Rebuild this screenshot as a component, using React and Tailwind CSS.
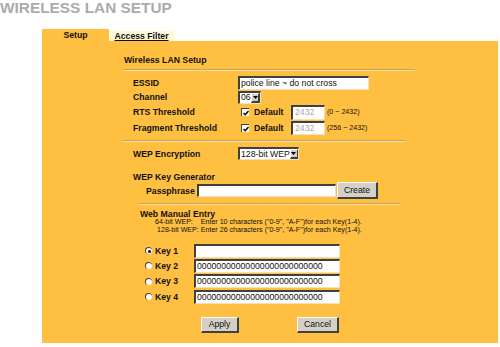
const sunken =
  'bg-white border-t-2 border-l-2 border-b border-r border-t-[#404040] border-l-[#404040] border-b-[#f4e2b4] border-r-[#f4e2b4]'
const raised =
  'bg-[#d4d0c8] border-t border-l border-t-white border-l-white border-b-2 border-r-2 border-b-[#404040] border-r-[#404040]'

function Field({ className = '', children }) {
  return (
    <div className={`flex items-center overflow-hidden whitespace-nowrap text-[8.7px] leading-none ${sunken} ${className}`}>
      {children}
    </div>
  )
}

function Select({ className = '', value }) {
  return (
    <div className={`flex items-stretch overflow-hidden whitespace-nowrap text-[8.7px] leading-none ${sunken} ${className}`}>
      <span className="flex-1 flex items-center pl-[1px]">{value}</span>
      <span className={`w-[9px] shrink-0 flex items-center justify-center ${raised}`}>
        <svg width="5" height="3" viewBox="0 0 5 3">
          <polygon points="0,0 5,0 2.5,3" fill="#000" />
        </svg>
      </span>
    </div>
  )
}

function Check() {
  return (
    <span className="ml-[3px] w-[8px] h-[8px] bg-white border-t border-l border-t-[#404040] border-l-[#404040] flex items-center justify-center">
      <svg width="6" height="6" viewBox="0 0 6 6">
        <path d="M0.5 3 L2.3 4.8 L5.5 1" stroke="#000" strokeWidth="1.4" fill="none" />
      </svg>
    </span>
  )
}

function Radio({ on }) {
  return (
    <span className="ml-[22px] w-[7px] h-[7px] rounded-full bg-white border-t border-l border-t-[#404040] border-l-[#404040] flex items-center justify-center">
      {on && <span className="w-[3px] h-[3px] rounded-full bg-black" />}
    </span>
  )
}

function Line({ className = '' }) {
  return <div className={`h-[2px] border-t border-b border-t-[#c9a35a] border-b-[#ffe3a0] ${className}`} />
}

function Row({ label, className = '', children }) {
  return (
    <div className={`flex items-center ${className}`}>
      <span className="w-[115px] pl-[10px] font-bold">{label}</span>
      {children}
    </div>
  )
}

const keys = [
  { n: 1, v: '', on: true, h: 'h-[15px]' },
  { n: 2, v: '00000000000000000000000000', h: 'h-[15px]' },
  { n: 3, v: '00000000000000000000000000', h: 'h-[16px]' },
  { n: 4, v: '00000000000000000000000000', h: 'h-[15px]' },
]

export default function App() {
  return (
    <div className="w-[500px] h-[347px] bg-white overflow-hidden font-['Liberation_Sans',Arial,Helvetica,sans-serif] text-[#111]">
      <h1 className="text-[15.4px] font-bold leading-[15px] text-[#ababab] whitespace-nowrap">WIRELESS LAN SETUP</h1>

      <div className="ml-[42px] mt-[14px] flex h-[12px] text-[8.7px] font-bold leading-none">
        <div className="w-[67px] bg-[#ffbf40] flex items-center justify-center">Setup</div>
        <div className="mt-[2px] w-[65px] h-[10px] bg-[#fff7d8] flex items-center justify-center underline">
          Access Filter
        </div>
      </div>

      <div className="ml-[42px] w-[456px] h-[302px] bg-[#ffbf40] pl-[81px] pt-[12px] flex flex-col text-[8.7px] leading-[12px]">
        <div className="h-[13px] flex items-center pl-[1px] font-bold">Wireless LAN Setup</div>
        <Line className="mt-[3px] w-[292px]" />

        <Row label="ESSID" className="mt-[4px] h-[15px]">
          <Field className="w-[131px] h-[14px]">
            <span className="pl-[1px]">police line ~ do not cross</span>
          </Field>
        </Row>
        <Row label="Channel" className="h-[14px]">
          <Select className="w-[23px] h-[13px]" value="06" />
        </Row>
        <Row label="RTS Threshold" className="h-[16px]">
          <Check />
          <span className="ml-[5px] w-[37px] font-bold">Default</span>
          <Field className="w-[34px] h-[15px] text-[#a8a8a8]">
            <span className="pl-[2px]">2432</span>
          </Field>
          <span className="ml-[2px] text-[7.1px]">(0 ~ 2432)</span>
        </Row>
        <Row label="Fragment Threshold" className="h-[16px]">
          <Check />
          <span className="ml-[5px] w-[37px] font-bold">Default</span>
          <Field className="w-[34px] h-[14px] text-[#a8a8a8]">
            <span className="pl-[2px]">2432</span>
          </Field>
          <span className="ml-[2px] text-[7.1px]">(256 ~ 2432)</span>
        </Row>

        <Line className="mt-[4px] -ml-[1px] w-[284px]" />

        <Row label="WEP Encryption" className="mt-[4px] h-[15px]">
          <Select className="w-[61px] h-[13px]" value="128-bit WEP" />
        </Row>

        <div className="mt-[11px] h-[10px] flex items-center pl-[10px] font-bold">WEP Key Generator</div>
        <div className="h-[17px] flex items-center">
          <span className="w-[74px] pl-[23px] font-bold">Passphrase</span>
          <Field className="w-[139px] h-[13px]" />
          <button className={`ml-[1px] w-[41px] h-[17px] text-[8.7px] leading-none ${raised}`}>Create</button>
        </div>

        <Line className="mt-[4px] ml-[16px] w-[261px]" />

        <div className="mt-[4px] h-[10px] flex items-center pl-[17px] font-bold">Web Manual Entry</div>
        <div className="h-[8px] flex items-center pl-[32px] text-[7.1px] leading-none whitespace-pre">
          64-bit WEP:    Enter 10 characters ("0-9", "A-F")for each Key(1-4).
        </div>
        <div className="h-[8px] flex items-center pl-[34px] text-[7.1px] leading-none whitespace-pre">
          128-bit WEP: Enter 26 characters ("0-9", "A-F")for each Key(1-4).
        </div>

        <div className="mt-[8px] flex flex-col">
          {keys.map(k => (
            <div key={k.n} className={`flex items-center ${k.h}`}>
              <Radio on={k.on} />
              <span className="ml-[3px] w-[39px] font-bold">Key {k.n}</span>
              <Field className="w-[146px] h-[14px]">
                <span className="pl-[1px]">{k.v}</span>
              </Field>
            </div>
          ))}
        </div>

        <div className="mt-[13px] h-[16px] flex items-center">
          <button className={`ml-[78px] w-[38px] h-[16px] text-[8.7px] leading-none ${raised}`}>Apply</button>
          <button className={`ml-[58px] w-[42px] h-[16px] text-[8.7px] leading-none ${raised}`}>Cancel</button>
        </div>
      </div>
    </div>
  )
}
